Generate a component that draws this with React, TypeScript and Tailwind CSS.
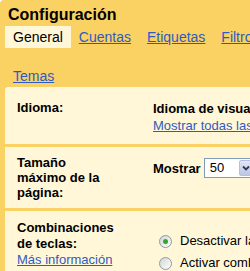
import React from 'react';

const tabs = ['Cuentas', 'Etiquetas', 'Filtros', 'Reenvío y correo POP/IMAP'];

function Radio({ checked }: { checked?: boolean }) {
  return (
    <span className="ml-[6px] flex h-[13px] w-[13px] shrink-0 items-center justify-center rounded-full border border-[#8e9aa6] bg-linear-to-br from-[#d6d6ce] to-white">
      {checked && <span className="h-[5px] w-[5px] rounded-full bg-[#2ea82e]" />}
    </span>
  );
}

export default function App() {
  return (
    <div className="h-[271px] w-[250px] overflow-hidden bg-white font-['Liberation_Sans',Arial,sans-serif] text-black">
      <div className="min-h-full w-[620px] rounded-tl-[4px] bg-[#fad163] pt-[5px]">
        <h1 className="pl-[8px] text-[16px] font-bold leading-[20px]">Configuración</h1>

        <div className="mt-[1px] flex pl-[5px] text-[14px] leading-[22px]">
          <div className="bg-[#fff7d7] px-[8px]">General</div>
          {tabs.map((t) => (
            <a key={t} href="#" className="px-[8px] whitespace-nowrap text-[#2f5bc0] underline">
              {t}
            </a>
          ))}
        </div>
        <div className="mt-[17px] flex pl-[5px] text-[14px] leading-[22px]">
          <a href="#" className="px-[8px] text-[#2f5bc0] underline">Temas</a>
        </div>

        <div className="ml-[5px] rounded-tl-[3px] bg-[#fff7d7] text-[13px]">
          {/* idioma */}
          <div className="flex border-b-[3px] border-[#fad163] pt-[13px] pb-[10px]">
            <div className="w-[148px] shrink-0 pl-[12px] pr-[35px] font-bold leading-[16px]">Idioma:</div>
            <div className="leading-[17px] whitespace-nowrap">
              <div className="font-bold">Idioma de visualización de Gmail:</div>
              <a href="#" className="text-[#2f5bc0] underline">Mostrar todas las opciones de idioma</a>
            </div>
          </div>

          {/* tamaño de página */}
          <div className="flex border-b-[3px] border-[#fad163] pt-[8px] pb-[8px]">
            <div className="w-[148px] shrink-0 pl-[12px] pr-[35px] font-bold leading-[15px]">
              Tamaño máximo de la página:
            </div>
            <div className="mt-[3px] flex items-center gap-[3px] self-start leading-[15px] whitespace-nowrap">
              <span className="font-bold">Mostrar</span>
              <div className="flex h-[20px] w-[52px] border border-[#7f9db9] bg-white">
                <span className="flex-1 pl-[5px] leading-[18px]">50</span>
                <span className="m-[1px] flex w-[15px] items-center justify-center rounded-[2px] border border-[#b4bfdf] bg-linear-to-b from-[#e3e7f5] to-[#bcc5e2]">
                  <svg width="8" height="6" viewBox="0 0 8 6">
                    <path d="M1 1.5 L4 4.5 L7 1.5" fill="none" stroke="#2b3a5e" strokeWidth="1.8" />
                  </svg>
                </span>
              </div>
              <span>conversaciones por página</span>
            </div>
          </div>

          {/* atajos */}
          <div className="flex pt-[9px] pb-[8px]">
            <div className="w-[148px] shrink-0 pl-[12px] pr-[35px] leading-[16px]">
              <div className="font-bold">Combinaciones de teclas:</div>
              <a href="#" className="text-[#2f5bc0] underline">Más información</a>
            </div>
            <div className="pt-[10px] whitespace-nowrap">
              <div className="flex h-[22px] items-center gap-[8px]">
                <Radio checked />
                <span>Desactivar las combinaciones de teclas</span>
              </div>
              <div className="flex h-[22px] items-center gap-[8px]">
                <Radio />
                <span>Activar combinaciones de teclas</span>
              </div>
            </div>
          </div>
        </div>
      </div>
    </div>
  );
}
